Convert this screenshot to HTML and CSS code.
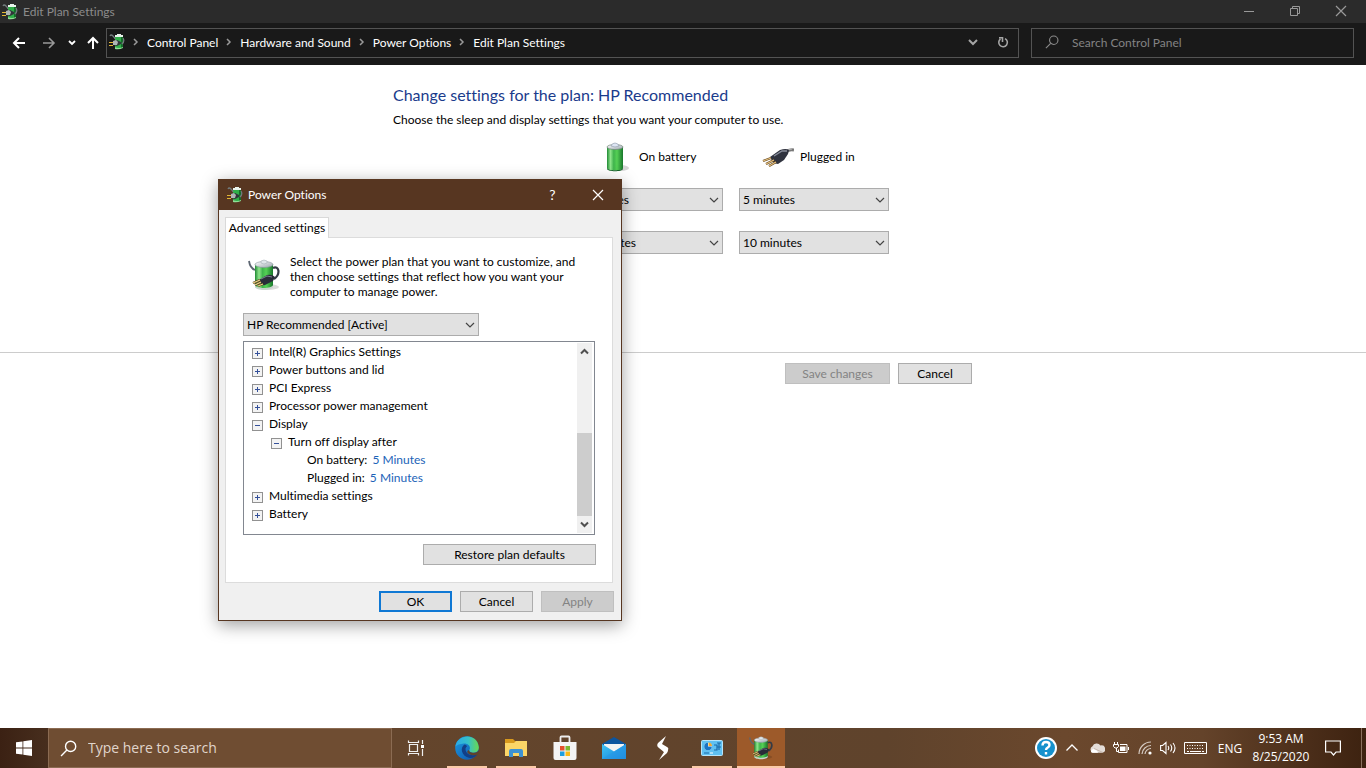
FILE: index.html
```html
<!DOCTYPE html>
<html lang="en">
<head>
<meta charset="utf-8">
<meta name="viewport" content="width=device-width, initial-scale=1">
<title>Edit Plan Settings</title>
<link rel="stylesheet" href="styles.css">
</head>
<body>
<svg class="defs" aria-hidden="true">
  <defs>
    <linearGradient id="cell" x1="0" x2="1" y1="0" y2="0">
      <stop offset="0" stop-color="#1f8a34"/><stop offset=".22" stop-color="#8fe58b"/><stop offset=".42" stop-color="#3fb44c"/><stop offset=".62" stop-color="#55d055"/><stop offset="1" stop-color="#18772b"/>
    </linearGradient>
    <linearGradient id="cap" x1="0" x2="1" y1="0" y2="1">
      <stop offset="0" stop-color="#ffffff"/><stop offset="1" stop-color="#9aa5ae"/>
    </linearGradient>
    <linearGradient id="edge-blue" x1="0" x2="1" y1="0" y2="1">
      <stop offset="0" stop-color="#1b9de2"/><stop offset="1" stop-color="#0f4fa8"/>
    </linearGradient>
    <linearGradient id="edge-green" x1="0" x2="1" y1="0" y2="0">
      <stop offset="0" stop-color="#2aa9e8"/><stop offset=".55" stop-color="#35c1c9"/><stop offset="1" stop-color="#6bd84d"/>
    </linearGradient>
    <linearGradient id="mail-body" x1="0" x2="1" y1="0" y2="1">
      <stop offset="0" stop-color="#3fc4f5"/><stop offset="1" stop-color="#1683d8"/>
    </linearGradient>
    <symbol id="power" viewBox="0 0 32 32">
      <ellipse cx="20" cy="28" rx="11" ry="3" fill="#000" opacity=".14"/>
      <path d="M7 5v22c0 4 18 4 18 0V5z" fill="url(#cell)"/>
      <path d="M7 26c1 4 17 4 18 0v2c-1 4-17 4-18 0z" fill="#c9d3cd"/>
      <ellipse cx="16" cy="5.500" rx="9" ry="3" fill="url(#cap)" stroke="#87949c" stroke-width=".6"/>
      <path d="M13 4V2q3-2 6 0v2q-3 2-6 0z" fill="#dfe6ea" stroke="#9aa5ad" stroke-width=".5"/>
      <path d="M1 2q1 7 6 9" fill="none" stroke="#5d6672" stroke-width="1.800"/>
      <path d="M25 9c6-3 8 6 1 11" fill="none" stroke="#343b46" stroke-width="2.200"/>
      <path d="M11 21l8-5q5-1 8 2l-2 4-8 4q-4 1-6-5z" fill="#292c38"/>
      <path d="M13 20l6-3 5 1" fill="none" stroke="#7b8190" stroke-width="1"/>
      <path d="M12 21l-7 3M13 23l-6 3M15 25l-5 2" stroke="#4f3a14" stroke-width="2.200"/>
      <path d="M12 21l-7 3M13 23l-6 3M15 25l-5 2" stroke="#efd28b" stroke-width="1.200"/>
    </symbol>
    <symbol id="power-small" viewBox="0 0 16 16">
      <path d="M6 2h8v11q-4 3-8 0z" fill="#2fae48"/>
      <path d="M12 2h2v11l-2 1z" fill="#166c2a"/>
      <path d="M6 13q4 2 8 0v1q-4 2-8 1z" fill="#8fdf96"/>
      <path d="M6 1h2V0h4v1h2v2H6z" fill="#e9f4ec"/>
      <path d="M1 2q1-2 3 0t2 3M14 4q2 3-1 6" fill="none" stroke="#727b7d" stroke-width="1.300"/>
      <path d="M4 7l4-1 4 2v2l-4 2-4-1z" fill="#30363a"/>
      <path d="M4 7l3-1 2 2-1 3-4 0z" fill="#aeb5b5"/>
      <path d="M0 8.500h4M0 11.500h4" stroke="#e1b632"/>
    </symbol>
    <symbol id="down" viewBox="0 0 10 10"><path d="M1 3l4 4 4-4" fill="none" stroke="currentColor" stroke-width="1.200"/></symbol>
    <symbol id="lens" viewBox="0 0 16 16"><path d="M6.500 9.500L1 15" fill="none" stroke="currentColor" stroke-width="1.300"/><circle cx="10" cy="6" r="4.800" fill="none" stroke="currentColor" stroke-width="1.300"/></symbol>
    <symbol id="cross" viewBox="0 0 12 12"><path d="M1 1l10 10M11 1L1 11" fill="none" stroke="currentColor" stroke-width="1.200"/></symbol>
  </defs>
</svg>

<div class="desktop">
  <header class="titlebar">
    <svg class="i16" aria-hidden="true"><use href="#power-small"/></svg>
    <h1 class="titlebar-text">Edit Plan Settings</h1>
    <button class="win-btn" aria-label="Minimize"><svg width="12" height="12" viewBox="0 0 12 12"><path d="M1 6.500h10" stroke="currentColor"/></svg></button>
    <button class="win-btn" aria-label="Restore"><svg width="12" height="12" viewBox="0 0 12 12" fill="none" stroke="currentColor"><path d="M1.500 3.500h7v7h-7zM3.500 3.500v-2h7v7h-2"/></svg></button>
    <button class="win-btn" aria-label="Close"><svg width="12" height="12"><use href="#cross"/></svg></button>
  </header>

  <nav class="navbar" aria-label="Location">
    <button class="nav-btn" aria-label="Back"><svg width="14" height="12" viewBox="0 0 14 12" fill="none" stroke="currentColor" stroke-width="2"><path d="M13 6H2M7 1L2 6l5 5"/></svg></button>
    <button class="nav-btn dim" aria-label="Forward"><svg width="14" height="12" viewBox="0 0 14 12" fill="none" stroke="currentColor" stroke-width="1.600"><path d="M1 6h11M7 1l5 5-5 5"/></svg></button>
    <button class="nav-btn narrow" aria-label="Recent locations"><svg width="8" height="6" viewBox="0 0 8 6" fill="none" stroke="currentColor" stroke-width="1.800"><path d="M1 1l3 3 3-3"/></svg></button>
    <button class="nav-btn up" aria-label="Up"><svg width="12" height="14" viewBox="0 0 12 14" fill="none" stroke="currentColor" stroke-width="2"><path d="M6 13V2M1 7l5-5 5 5"/></svg></button>
    <div class="address">
      <svg class="i16" aria-hidden="true"><use href="#power-small"/></svg>
      <ol class="crumbs">
        <li><svg class="sep" viewBox="0 0 6 8"><path d="M1 1l3 3-3 3"/></svg><a href="#">Control Panel</a></li>
        <li><svg class="sep" viewBox="0 0 6 8"><path d="M1 1l3 3-3 3"/></svg><a href="#">Hardware and Sound</a></li>
        <li><svg class="sep" viewBox="0 0 6 8"><path d="M1 1l3 3-3 3"/></svg><a href="#">Power Options</a></li>
        <li><svg class="sep" viewBox="0 0 6 8"><path d="M1 1l3 3-3 3"/></svg><a href="#">Edit Plan Settings</a></li>
      </ol>
      <button class="addr-btn" aria-label="Previous locations"><svg width="10" height="8" viewBox="0 0 10 8" fill="none" stroke="currentColor" stroke-width="2"><path d="M1 2l4 4 4-4"/></svg></button>
      <button class="addr-btn" aria-label="Refresh"><svg width="12" height="12" viewBox="0 0 12 12" fill="none" stroke="currentColor" stroke-width="1.600"><path d="M8 2.600a4.300 4.300 0 1 1-4.500.4M2 1.800h3.500V6"/></svg></button>
    </div>
    <label class="cp-search"><svg class="i14" aria-hidden="true"><use href="#lens"/></svg><input type="search" placeholder="Search Control Panel" aria-label="Search Control Panel"></label>
  </nav>

  <main class="page">
    <section class="plan">
      <h2>Change settings for the plan: HP Recommended</h2>
      <p>Choose the sleep and display settings that you want your computer to use.</p>
      <div class="plan-grid">
        <div class="source source-battery">
          <svg width="24" height="32" viewBox="0 0 24 32" aria-hidden="true">
            <ellipse cx="16" cy="27" rx="8" ry="3" fill="#000" opacity=".16"/>
            <path d="M2 6v21c0 3 16 3 16 0V6z" fill="url(#cell)"/>
            <path d="M2 27c1 3 15 3 16 0v1c-1 3-15 3-16 0z" fill="#126526"/>
            <ellipse cx="10" cy="6" rx="8" ry="2.500" fill="url(#cap)" stroke="#72857a" stroke-width=".7"/>
            <path d="M6 5q1-3 4-3t4 3q-4 2-8 0z" fill="#dde5f3" stroke="#8b97a6" stroke-width=".6"/>
          </svg>
          <span>On battery</span>
        </div>
        <div class="source source-plug">
          <svg width="32" height="20" viewBox="0 0 32 20" aria-hidden="true">
            <path d="M24 5q3-3 8-2" fill="none" stroke="#777" stroke-width="3"/>
            <path d="M24 4q3-2 6-2" fill="none" stroke="#ccc" stroke-width=".8"/>
            <path d="M8 10l10-7q6-2 9 0l-1 4-4 6-6 4q-5 0-8-7z" fill="#30333f"/>
            <path d="M12 9l8-5 5 0" fill="none" stroke="#888d9b" stroke-width="1.400"/>
            <path d="M9 11l-8 3M12 13l-8 4M14 15l-7 4" stroke="#5e431c" stroke-width="2.200"/>
            <path d="M9 11l-8 3M12 13l-8 4M14 15l-7 4" stroke="#e6c07e" stroke-width="1.200"/>
          </svg>
          <span>Plugged in</span>
        </div>
        <div class="combo"><select aria-label="Turn off the display, on battery"><option>5 minutes</option></select><svg><use href="#down"/></svg></div>
        <div class="combo"><select aria-label="Turn off the display, plugged in"><option>5 minutes</option></select><svg><use href="#down"/></svg></div>
        <div class="combo"><select aria-label="Put the computer to sleep, on battery"><option>10 minutes</option></select><svg><use href="#down"/></svg></div>
        <div class="combo"><select aria-label="Put the computer to sleep, plugged in"><option>10 minutes</option></select><svg><use href="#down"/></svg></div>
      </div>
    </section>
    <footer class="page-actions">
      <button class="btn save" disabled>Save changes</button>
      <button class="btn">Cancel</button>
    </footer>
  </main>

  <section class="dialog" role="dialog" aria-labelledby="dialog-title">
    <header class="dialog-head">
      <svg class="i16" aria-hidden="true"><use href="#power-small"/></svg>
      <h2 id="dialog-title">Power Options</h2>
      <button class="win-btn help" aria-label="Help">?</button>
      <button class="win-btn" aria-label="Close"><svg width="12" height="12"><use href="#cross"/></svg></button>
    </header>
    <div class="dialog-body">
      <div role="tablist"><button class="tab" role="tab" aria-selected="true">Advanced settings</button></div>
      <div class="panel" role="tabpanel">
        <div class="intro">
          <svg width="32" height="34"><use href="#power"/></svg>
          <p>Select the power plan that you want to customize, and then choose settings that reflect how you want your computer to manage power.</p>
        </div>
        <div class="combo scheme"><select aria-label="Power plan"><option>HP Recommended [Active]</option></select><svg><use href="#down"/></svg></div>
        <div class="tree-box">
          <ul class="tree">
            <li><button class="node">Intel(R) Graphics Settings</button></li>
            <li><button class="node">Power buttons and lid</button></li>
            <li><button class="node">PCI Express</button></li>
            <li><button class="node">Processor power management</button></li>
            <li><button class="node open">Display</button>
              <ul>
                <li><button class="node open">Turn off display after</button>
                  <ul>
                    <li class="leaf">On battery: <a href="#">5 Minutes</a></li>
                    <li class="leaf">Plugged in: <a href="#">5 Minutes</a></li>
                  </ul>
                </li>
              </ul>
            </li>
            <li><button class="node">Multimedia settings</button></li>
            <li><button class="node">Battery</button></li>
          </ul>
          <div class="scroll">
            <button aria-label="Scroll up"><svg width="9" height="7" viewBox="0 0 9 7"><path d="M1 5.500L4.500 2 8 5.500"/></svg></button>
            <div class="track"><div class="thumb"></div></div>
            <button aria-label="Scroll down"><svg width="9" height="7" viewBox="0 0 9 7"><path d="M1 1.500L4.500 5 8 1.500"/></svg></button>
          </div>
        </div>
        <button class="btn restore">Restore plan defaults</button>
      </div>
      <div class="dialog-actions">
        <button class="btn default">OK</button>
        <button class="btn">Cancel</button>
        <button class="btn" disabled>Apply</button>
      </div>
    </div>
  </section>

  <footer class="taskbar">
    <button class="start" aria-label="Start"><svg width="16" height="16" viewBox="0 0 16 16" fill="#fff"><path d="M0 2.300l6.500-.9v6.100H0zM7.300 1.300L16 0v7.500H7.300zM0 8.400h6.500v6.200L0 13.700zM7.300 8.400H16V16l-8.700-1.300z"/></svg></button>
    <label class="task-search"><svg width="17" height="17"><use href="#lens"/></svg><input type="search" placeholder="Type here to search" aria-label="Type here to search"></label>
    <button class="start" aria-label="Task View"><svg width="18" height="16" viewBox="0 0 18 16" fill="none" stroke="#eee" stroke-width="1.200"><path d="M2.500 4.500h8v7h-8zM1.500 .5v2h10v-2M1.500 15.500v-2h10v2M15.500 0v4M15.500 9v7"/><path d="M14 5h3v3h-3z" fill="#fff" stroke="none"/></svg></button>
    <div class="apps">
      <button class="app running" aria-label="Edge"><svg width="24" height="24" viewBox="0 0 24 24">
        <circle cx="12" cy="12" r="11.800" fill="url(#edge-blue)"/>
        <path d="M.4 10.500C2-2 22-4 23.800 11c.3 4-3 6.500-7 5.500-2-.5-3-1.500-2.500-2.500 2-3-1-7-5.500-6.500C5 7.800 1.500 9 .4 10.500z" fill="url(#edge-green)"/>
        <path d="M9.500 8.500c-5 3-3 12 5 13.500 4 .4 7-2 8-4-6 3-12 0-12-5 0-1 .8-2 1.600-2.700q-1-1.500-2.600-1.800z" fill="#123f87"/>
        <path d="M14.500 14c-1 1 .3 2.200 2 2.600 3 .7 5.500 0 7-1.800q1.500 2-1 3.600c-3 1.300-6 1.200-8.500-.3-2.400-1.500-2.400-3.700.5-4.100z" fill="#5f432b"/>
      </svg></button>
      <button class="app running" aria-label="File Explorer"><svg width="22" height="20" viewBox="0 0 22 20">
        <path d="M0 1h8l2 2h12v5H0z" fill="#d99a1d"/><path d="M0 5h9l2-2h11v15H0z" fill="#fcd667"/><path d="M4 19v-6q0-2 2-2h10q2 0 2 2v6h-4v-4H8v4z" fill="#3d92d3"/>
      </svg></button>
      <button class="app" aria-label="Store"><svg width="24" height="26" viewBox="0 0 24 26">
        <path d="M7.500 8V2.500q0-1 1-1h7q1 0 1 1V8" fill="none" stroke="#eee" stroke-width="1.800"/><path d="M.5 7h23v16q0 2-2 2h-19q-2 0-2-2z" fill="#f4f4f4"/>
        <path d="M7 11h4.500v4.500H7z" fill="#e3502c"/><path d="M12.500 11H17v4.500h-4.500z" fill="#7cb82f"/><path d="M7 16.500h4.500V21H7z" fill="#1f9ee0"/><path d="M12.500 16.500H17V21h-4.500z" fill="#fbb917"/>
      </svg></button>
      <button class="app" aria-label="Mail"><svg width="24" height="22" viewBox="0 0 24 22">
        <path d="M0 7L12 0l12 7v5H0z" fill="#0c559f"/><path d="M2 7h20v8H2z" fill="#f3f3f3"/><path d="M0 7l12 7.500L24 7v15H0z" fill="url(#mail-body)"/><path d="M0 22l24-15v15z" fill="#2796e6" opacity=".6"/>
      </svg></button>
      <button class="app" aria-label="S"><svg width="12" height="24" viewBox="0 0 12 24" fill="#fff"><path d="M9 0L1 7q-2 3 1 5l5 4 4-2q1-2-1-3L5 8z"/><path d="M2 24l8-7q2-3 0-5L7 10l-2 3 2 3z"/></svg></button>
      <button class="app running" aria-label="Control Panel"><svg width="22" height="16" viewBox="0 0 22 16">
        <rect x=".5" y=".5" width="21" height="15" rx="1" fill="#5fc0f1" stroke="#b7e4fa"/><circle cx="7" cy="6.500" r="3.800" fill="#fff"/><path d="M7 6.500V2.700a3.800 3.800 0 1 0 3.800 3.800z" fill="#1a74c4"/><path d="M7.500 6V2.500A4 4 0 0 1 11 6z" fill="#f4a72a"/>
        <path d="M13 5h3v5h-3M18 3v7M16 3h4M16 7h4M3 13h5" stroke="#1b69a8" stroke-width="1.200" fill="none"/><path d="M9 13h3" stroke="#fff"/>
      </svg></button>
      <button class="app running active" aria-label="Power Options"><svg width="24" height="24"><use href="#power"/></svg></button>
    </div>
    <div class="tray">
      <button class="w26" aria-label="Help"><svg width="22" height="22" viewBox="0 0 22 22"><circle cx="11" cy="11" r="11" fill="#fff"/><circle cx="11" cy="11" r="9" fill="#1591cd"/><path d="M7.500 8.500q0-3.500 3.500-3.500t3.500 3q0 1.500-1.800 2.600Q11 11.500 11 13M11 15v2.400" fill="none" stroke="#fff" stroke-width="2.400"/></svg></button>
      <button class="w26" aria-label="Show hidden icons"><svg width="12" height="8" viewBox="0 0 12 8" fill="none" stroke="#fff" stroke-width="1.300"><path d="M.5 6.500L6 1l5.500 5.500"/></svg></button>
      <button class="w24" aria-label="OneDrive"><svg width="16" height="10" viewBox="0 0 16 10"><path d="M4 9.800a3.500 3.500 0 0 1-.5-6.500A4.500 4.500 0 0 1 11.500 2.500 3.500 3.500 0 0 1 13.500 9.800z" fill="#e4ddd8"/><path d="M2 9q0-3 3-3 3 .5 4 3.800H3z" fill="#fff"/><path d="M5 5.500l9 4" stroke="#bba99d" stroke-width=".7"/></svg></button>
      <button class="w24" aria-label="Battery"><svg width="16" height="12" viewBox="0 0 16 12" fill="none" stroke="#fff"><path d="M1.500 0v2M4.500 0v2M.5 2.500h5v2L4 6H2L.5 4.500zM3.500 6v3.500H6"/><path d="M7 2.500h7v8H5.500v-3M15.500 5v3"/><path d="M7 4.500h5.500V9H7z" fill="#fff" stroke="none"/></svg></button>
      <button class="w24" aria-label="Wi-Fi"><svg width="14" height="14" viewBox="0 0 14 14" fill="none" stroke="#d6cbc3" stroke-width="1.200"><path d="M1 13A12 12 0 0 1 13 1M4 13A9 9 0 0 1 13 4.500M7 13a6 6 0 0 1 6-5.500"/><circle cx="12" cy="12" r="1.600" fill="#fff" stroke="none"/></svg></button>
      <button class="w22" aria-label="Volume"><svg width="16" height="14" viewBox="0 0 16 14" fill="none" stroke="#fff" stroke-width="1.100"><path d="M.6 4.500h2L6 1.500v11L2.600 9.500h-2zM8 5q1.500 2 0 4M10.500 3.500q2.500 3.500 0 7M13 2q4 5 0 10"/></svg></button>
      <button class="w32" aria-label="Touch keyboard"><svg width="23" height="14" viewBox="0 0 23 14" fill="none" stroke="#fff"><path d="M.5 1.500h22v11H.5z"/><path d="M3 4.500h17M3 7.500h17" stroke-dasharray="1 1.500"/><path d="M3 10.500h2M6 10.500h11M18 10.500h2"/></svg></button>
      <button class="w38">ENG</button>
      <button class="clock"><span>9:53 AM</span><span>8/25/2020</span></button>
      <button class="w40" aria-label="Notifications"><svg width="16" height="16" viewBox="0 0 16 16" fill="none" stroke="#fff" stroke-width="1.200"><path d="M.6 1h14.800v11H11l-2.500 3L6 12H.6z"/></svg></button>
      <button class="show-desktop" aria-label="Show desktop"></button>
    </div>
  </footer>
</div>
</body>
</html>
```
FILE: styles.css
```css
* { box-sizing: border-box; }
body, h1, h2, p, ul, ol { margin: 0; padding: 0; }
body, button, input, select {
  font-family: Lato, "Open Sans", sans-serif;
  font-size: 12px;
  line-height: 15px;
  font-variant-ligatures: none;
  color: #000;
}
h1, h2 { font-weight: 400; font-size: 12px; }
ul, ol { list-style: none; }
a { text-decoration: none; }
button { border: 0; padding: 0; background: none; }
svg { display: block; flex: none; }
.defs { position: absolute; width: 0; height: 0; }
.i16 { width: 16px; height: 16px; }
.i14 { width: 14px; height: 14px; }

.desktop { display: flex; flex-direction: column; min-height: 100vh; position: relative; background: #fff; }

/* Window frame */
.titlebar { display: flex; align-items: center; height: 23px; padding-left: 2px; gap: 5px; background: #2b2b2b; }
.titlebar-text { flex: 1; color: #8c8c8c; }
.win-btn { display: grid; place-items: center; width: 45px; height: 100%; color: #fff; }
.titlebar .win-btn { width: 41px; padding-bottom: 2px; color: #999; }
.titlebar .win-btn:last-child { margin-right: 5px; }

.navbar { display: flex; align-items: center; height: 42px; padding: 0 12px 2px 4px; background: #191919; }
.nav-btn { display: grid; place-items: center; width: 30px; height: 28px; color: #fff; }
.nav-btn.dim { color: #999; }
.nav-btn.narrow { width: 16px; }
.nav-btn.up { width: 26px; }
.address { display: flex; flex: 1; align-items: center; height: 30px; padding: 0 0 2px 2px; border: 1px solid #535353; }
.crumbs { display: flex; flex: 1; }
.crumbs li { display: flex; align-items: center; }
.crumbs a { color: #fff; }
.sep { width: 6px; height: 8px; margin: 0 8px; fill: none; stroke: #999; stroke-width: 1.5; }
.addr-btn { display: grid; place-items: center; width: 30px; height: 26px; color: #a5a5a5; }
.cp-search { display: flex; align-items: center; width: 323px; height: 30px; margin-left: 12px; padding: 0 0 2px 13px; gap: 13px; border: 1px solid #535353; color: #8a8a8a; }
.cp-search input { flex: 1; min-width: 0; border: 0; padding: 0; background: none; outline: 0; }
.cp-search input::placeholder { color: #838383; }

/* Page */
.page { flex: 1; }
.plan { height: 287px; padding: 19px 0 0 393px; }
.plan h2 { font-size: 16px; line-height: 22px; color: #1a3b8c; }
.plan p { margin-top: 6px; }
.plan-grid { display: grid; grid-template-columns: 150px 150px; column-gap: 16px; row-gap: 20px; padding: 14px 0 0 180px; }
.source { display: flex; align-items: center; height: 31px; margin-bottom: -4px; }
.source-battery { padding-left: 32px; gap: 10px; }
.source-plug { padding-left: 23px; gap: 6px; }
.combo { display: grid; height: 23px; align-items: center; }
.combo select, .combo svg { grid-area: 1 / 1; }
.combo select { width: 100%; height: 100%; appearance: none; padding: 0 20px 0 3px; border: 1px solid #acacac; border-radius: 0; background: #e1e1e1; }
.combo svg { justify-self: end; width: 10px; height: 10px; margin-right: 4px; color: #444; pointer-events: none; }
.page-actions { display: flex; gap: 8px; padding: 10px 0 0 785px; border-top: 1px solid #ccc; }
.btn { width: 74px; height: 21px; border: 1px solid #acacac; background: #e1e1e1; }
.btn.save { width: 105px; }
.btn:disabled { border-color: #bfbfbf; background: #ccc; color: #838383; }

/* Dialog window */
.dialog { position: absolute; left: 218px; top: 179px; width: 404px; border: 1px solid #573621; background: #f0f0f0; box-shadow: 0 4px 16px rgba(0, 0, 0, .38); }
.dialog-head { display: flex; align-items: center; height: 30px; padding: 0 1px 1px 8px; gap: 5px; background: #573621; }
.dialog-head h2 { flex: 1; color: #fff; }
.dialog-head .win-btn { margin-left: -5px; }
.help { font-size: 14px; }
.dialog-body { padding: 7px 8px 8px 6px; }
.tab { display: block; position: relative; width: 104px; height: 21px; margin-bottom: -1px; padding-bottom: 2px; border: 1px solid #d9d9d9; border-bottom: 0; background: #fff; }
.panel { padding: 16px 16px 17px 17px; border: 1px solid #dcdcdc; background: #fff; }
.intro { display: flex; gap: 10px; padding-left: 5px; }
.intro svg { margin-top: 4px; }
.intro p { width: 300px; }
.scheme { width: 236px; margin-top: 14px; }
.tree-box { display: flex; justify-content: space-between; width: 352px; height: 194px; margin-top: 5px; padding: 1px 0 1px 1px; border: 1px solid #828790; background: #fff; }
.tree { padding-left: 7px; }
.tree ul { padding-left: 19px; }
.tree li { line-height: 18px; white-space: nowrap; }
.node { display: flex; align-items: center; gap: 6px; height: 18px; padding-bottom: 2px; }
.node::before { content: ""; width: 9px; height: 9px; margin-top: 4px; border: 1px solid #919191; background: linear-gradient(#34509a, #34509a) center / 5px 1px no-repeat, linear-gradient(#34509a, #34509a) center / 1px 5px no-repeat, #f3f3f3; }
.node.open::before { background: linear-gradient(#34509a, #34509a) center / 5px 1px no-repeat, #f3f3f3; }
.leaf { padding-left: 17px; }
.leaf a { margin-left: 2px; color: #1c63b8; }
.scroll { display: flex; flex-direction: column; width: 17px; background: #f0f0f0; border-right: 2px solid #fff; }
.scroll button { display: grid; place-items: center; height: 17px; }
.scroll path { fill: none; stroke: #505050; stroke-width: 2; }
.track { display: flex; flex: 1; align-items: flex-end; }
.thumb { width: 100%; height: 53%; background: #cdcdcd; }
.btn.restore { display: block; width: 173px; margin: 9px 0 0 auto; }
.dialog-actions { display: flex; justify-content: flex-end; gap: 8px; margin-right: -1px; padding-top: 8px; }
.dialog-actions .btn { width: 73px; }
.btn.default { border: 2px solid #0f78d4; }

/* Taskbar */
.taskbar { display: flex; height: 40px; background: linear-gradient(90deg, #3b2113 0, #49301f 4%, #64452c 28%, #5f432c 65%, #6b482d 78%, #64432a 88%, #3d2210 100%); color: #fff; }
.taskbar button, .taskbar input { font-family: "Open Sans", "Noto Sans", sans-serif; }
.taskbar button { display: grid; place-items: center; color: #fff; }
.start { width: 48px; }
.task-search { display: flex; align-items: center; flex: none; width: 344px; padding-left: 11px; gap: 11px; border: 1px solid #8b6b52; background: #6f4d32; }
.task-search input { flex: 1; min-width: 0; border: 0; padding: 0; background: none; outline: 0; font-size: 14px; line-height: 20px; }
.task-search input::placeholder { color: #e0d5cc; }
.apps { display: flex; flex: 1; gap: 1px; padding-left: 3px; }
.taskbar .app { width: 48px; background-repeat: no-repeat; background-position: center bottom; }
.taskbar .running { background-image: linear-gradient(#fbcaa8, #fbcaa8); background-size: 40px 2px; }
.taskbar .active { background-color: #9d5a2a; background-size: 48px 2px; }
.tray { display: flex; }
.w22 { width: 22px; }
.w24 { width: 24px; }
.w26 { width: 26px; }
.w32 { width: 32px; }
.w38 { width: 38px; }
.w40 { width: 40px; }
.taskbar .clock { width: 64px; align-content: center; line-height: 18px; }
.show-desktop { width: 5px; margin-left: 8px; border-left: 1px solid #8a705e; }
```
